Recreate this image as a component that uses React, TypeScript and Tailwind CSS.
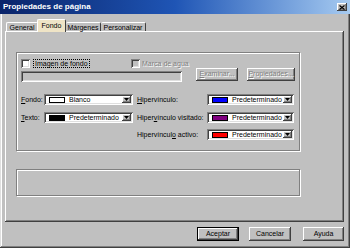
import React from "react";

const raised =
  "shadow-[inset_-1px_-1px_0_#404040,inset_1px_1px_0_#fff,inset_-2px_-2px_0_#808080]";
const sunken =
  "shadow-[inset_1px_1px_0_#808080,inset_-1px_-1px_0_#fff,inset_2px_2px_0_#404040,inset_-2px_-2px_0_#dfdfdf]";
const etched = "border border-[#808080] shadow-[inset_1px_1px_0_#fff,1px_1px_0_#fff]";
const disabledText = "text-[#808080] [text-shadow:1px_1px_0_#fff]";

function ColorSelect({ swatch, label, width }: { swatch: string; label: string; width: string }) {
  return (
    <div className={`flex items-center h-[11px] bg-white ${width} ${sunken} pl-[5px] pr-[2px]`}>
      <span className={`w-[16px] h-[6px] border border-black ${swatch}`} />
      <span className="ml-[4px] flex-1 leading-none">{label}</span>
      <span className={`w-[9px] h-[7px] bg-[#c0c0c0] ${raised} flex items-center justify-center`}>
        <svg width="5" height="3" viewBox="0 0 5 3">
          <path d="M0 0h5L2.5 3z" fill="#000" />
        </svg>
      </span>
    </div>
  );
}

function Button({ children, w, isDefault, disabled }: { children: React.ReactNode; w: string; isDefault?: boolean; disabled?: boolean }) {
  return (
    <div
      className={`${w} flex items-center justify-center bg-[#c0c0c0] ${raised} ${isDefault ? "border border-black" : ""} ${disabled ? disabledText : ""}`}
    >
      {children}
    </div>
  );
}

export default function App() {
  return (
    <div className="w-[350px] h-[248px] bg-[#c0c0c0] font-['Liberation_Sans',Arial,sans-serif] text-[7px] text-black overflow-hidden flex flex-col shadow-[inset_-1px_-1px_0_#404040,inset_1px_1px_0_#dfdfdf,inset_-2px_-2px_0_#808080,inset_2px_2px_0_#fff]">
      {/* title bar */}
      <div className="h-[14px] flex items-center justify-between bg-gradient-to-r from-[#0a246a] via-[#1f55b5] to-[#a6caf0] pl-[3px] pr-[3px]">
        <span className="text-white font-bold text-[8px] leading-none">Propiedades de página</span>
        <span className={`w-[10px] h-[8px] bg-[#c0c0c0] ${raised} flex items-center justify-center`}>
          <svg width="6" height="5" viewBox="0 0 6 5">
            <path d="M0.5 0.5L5.5 4.5M5.5 0.5L0.5 4.5" stroke="#000" strokeWidth="1.2" />
          </svg>
        </span>
      </div>

      {/* tabs */}
      <div className="mt-[5px] ml-[6px] h-[12px] flex items-end relative z-10">
        <div className="w-[32px] h-[9px] border-t border-l border-white border-r border-r-[#404040] rounded-t-[2px] flex items-center justify-center leading-none">
          General
        </div>
        <div className="w-[29px] h-[13px] -mb-[1px] -ml-[1px] bg-[#efe4c6] border-t border-l border-white border-r border-r-[#404040] rounded-t-[2px] flex items-start justify-center pt-[2px] leading-none">
          Fondo
        </div>
        <div className="w-[35px] h-[9px] border-t border-white border-r border-r-[#404040] rounded-t-[2px] flex items-center justify-center leading-none">
          Márgenes
        </div>
        <div className="w-[45px] h-[9px] border-t border-white border-r border-r-[#404040] rounded-t-[2px] flex items-center justify-center leading-none">
          Personalizar
        </div>
      </div>

      {/* panel */}
      <div className={`ml-[5px] w-[339px] h-[191px] ${raised} pl-[11px] pt-[21px] flex flex-col`}>
        <div className={`w-[284px] h-[99px] ${etched} pl-[4px] pt-[6px] flex flex-col`}>
          <div className="h-[9px] flex items-center">
            <div className="w-[110px] flex items-center">
              <span className={`w-[9px] h-[9px] bg-white ${sunken}`} />
              <span className="ml-[3px] leading-none border border-dotted border-black px-[1px]">
                Imagen de fondo
              </span>
            </div>
            <span className={`w-[9px] h-[9px] bg-[#c0c0c0] ${sunken}`} />
            <span className={`ml-[2px] leading-none ${disabledText}`}>
              Marca de agua
            </span>
          </div>
          <div className="h-[13px] flex items-center">
            <div className={`w-[161px] h-[11px] bg-[#c0c0c0] ${sunken} mt-[4px]`} />
            <div className="ml-[14px] h-[13px] flex">
              <Button w="w-[42px]" disabled>
                <span><span className="underline">E</span>xaminar...</span>
              </Button>
              <div className="w-[9px]" />
              <Button w="w-[48px]" disabled>
                <span><span className="underline">P</span>ropiedades...</span>
              </Button>
            </div>
          </div>

          <div className="mt-[13px] flex items-center h-[11px]">
            <span className="w-[23px] leading-none"><span className="underline">F</span>ondo:</span>
            <ColorSelect swatch="bg-white" label="Blanco" width="w-[89px]" />
            <span className="ml-[4px] w-[70px] leading-none"><span className="underline">H</span>ipervínculo:</span>
            <ColorSelect swatch="bg-[#0000ff]" label="Predeterminado" width="w-[87px]" />
          </div>
          <div className="mt-[7px] flex items-center h-[11px]">
            <span className="w-[23px] leading-none"><span className="underline">T</span>exto:</span>
            <ColorSelect swatch="bg-black" label="Predeterminado" width="w-[89px]" />
            <span className="ml-[4px] w-[70px] leading-none">Hiper<span className="underline">v</span>ínculo visitado:</span>
            <ColorSelect swatch="bg-[#800080]" label="Predeterminado" width="w-[87px]" />
          </div>
          <div className="mt-[6px] flex items-center h-[11px]">
            <span className="w-[116px]" />
            <span className="w-[70px] leading-none">Hipervíncul<span className="underline">o</span> activo:</span>
            <ColorSelect swatch="bg-[#ff0000]" label="Predeterminado" width="w-[87px]" />
          </div>
        </div>

        <div className={`mt-[18px] w-[284px] h-[27px] ${etched}`} />
      </div>

      {/* bottom buttons */}
      <div className="mt-[5px] h-[14px] flex justify-end pr-[6px] gap-0">
        <Button w="w-[42px]" isDefault>Aceptar</Button>
        <div className="w-[10px]" />
        <Button w="w-[42px]">Cancelar</Button>
        <div className="w-[12px]" />
        <Button w="w-[41px]">Ayuda</Button>
      </div>
    </div>
  );
}
